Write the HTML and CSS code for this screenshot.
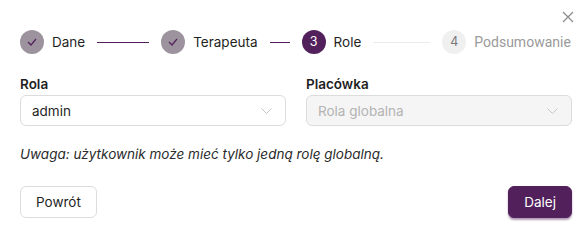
FILE: index.html
```html
<!DOCTYPE html>
<html lang="pl">
<head>
    <meta charset="UTF-8">
    <meta name="viewport" content="width=device-width, initial-scale=1.0">
    <title>Nowy użytkownik - role</title>
    <link rel="stylesheet" href="styles.css">
</head>
<body>
    <div class="modal">
        <button type="button" class="close" aria-label="Zamknij">
            <svg width="12" height="12" viewBox="0 0 12 12"><path d="M1 1L11 11M11 1L1 11" stroke="#8a8a8a" stroke-width="1.2" fill="none"/></svg>
        </button>

        <div class="steps">
            <div class="step done">
                <span class="dot"><svg width="10" height="8" viewBox="0 0 10 8"><path d="M1 4L4 7L9 1" stroke="#52215c" stroke-width="1.2" fill="none"/></svg></span>
                <span class="name">Dane</span>
            </div>
            <div class="line active"></div>
            <div class="step done">
                <span class="dot"><svg width="10" height="8" viewBox="0 0 10 8"><path d="M1 4L4 7L9 1" stroke="#52215c" stroke-width="1.2" fill="none"/></svg></span>
                <span class="name">Terapeuta</span>
            </div>
            <div class="line active short"></div>
            <div class="step current">
                <span class="dot">3</span>
                <span class="name">Role</span>
            </div>
            <div class="line"></div>
            <div class="step todo">
                <span class="dot">4</span>
                <span class="name">Podsumowanie</span>
            </div>
        </div>

        <div class="fields">
            <div class="field-group">
                <label for="role">Rola</label>
                <div class="select">
                    <span>admin</span>
                    <svg width="11" height="6" viewBox="0 0 11 6"><path d="M0.5 0.5L5.5 5.5L10.5 0.5" stroke="#c4c4c4" stroke-width="1" fill="none"/></svg>
                </div>
            </div>
            <div class="field-group">
                <label for="facility">Placówka</label>
                <div class="select disabled">
                    <span>Rola globalna</span>
                    <svg width="11" height="6" viewBox="0 0 11 6"><path d="M0.5 0.5L5.5 5.5L10.5 0.5" stroke="#c4c4c4" stroke-width="1" fill="none"/></svg>
                </div>
            </div>
        </div>

        <p class="note">Uwaga: użytkownik może mieć tylko jedną rolę globalną.</p>

        <div class="buttons">
            <button type="button" class="btn">Powrót</button>
            <button type="button" class="btn primary">Dalej</button>
        </div>
    </div>
</body>
</html>
```

FILE: styles.css
```css
body {
    font-family: Inter, "Noto Sans", sans-serif;
    background-color: #fff;
    color: #1f1f1f;
    margin: 0;
    padding: 0;
}
.modal {
    position: relative;
    width: 588px;
    height: 234px;
    box-sizing: border-box;
    padding: 30px 16px 0 20px;
}
.close {
    position: absolute;
    top: 11px;
    right: 14px;
    width: 12px;
    height: 12px;
    padding: 0;
    border: none;
    background: none;
    display: flex;
}
.steps {
    display: flex;
    align-items: center;
    height: 24px;
}
.step {
    display: flex;
    align-items: center;
    gap: 8px;
    font-size: 13.5px;
    line-height: 16px;
}
.dot {
    width: 24px;
    height: 24px;
    border-radius: 50%;
    display: flex;
    align-items: center;
    justify-content: center;
    font-size: 12.5px;
}
.step.done .dot {
    background-color: #9d939f;
}
.step.current .dot {
    background-color: #52215c;
    color: #fff;
}
.step.todo .dot {
    background-color: #f0f0f0;
    color: #7a7a7a;
}
.step.todo .name {
    font-family: Roboto, Inter, sans-serif;
    font-size: 14px;
    color: #9a9a9a;
}
.line {
    flex: 0 0 57px;
    height: 1px;
    background-color: #ebebeb;
    margin: 0 12px;
}
.line.active {
    background-color: #52215c;
    flex-basis: 52px;
}
.line.short {
    flex-basis: 20px;
}
.fields {
    display: flex;
    gap: 20px;
    margin-top: 21px;
}
.field-group {
    flex: 1;
}
.field-group label {
    display: block;
    font-size: 13.5px;
    font-weight: 600;
    margin-bottom: 2px;
    line-height: 18px;
}
.select {
    height: 31px;
    box-sizing: border-box;
    border: 1px solid #dcdcdc;
    border-radius: 6px;
    padding: 0 13px 0 11px;
    display: flex;
    align-items: center;
    justify-content: space-between;
    font-size: 13.5px;
}
.select.disabled {
    background-color: #f5f5f5;
    color: #b3b3b3;
}
.note {
    font-style: italic;
    font-size: 13.5px;
    margin: 19px 0 0;
    line-height: 18px;
    color: #2a2a2a;
}
.buttons {
    display: flex;
    justify-content: space-between;
    margin-top: 23px;
}
.btn {
    font-family: inherit;
    font-size: 13.5px;
    height: 32px;
    padding: 0 15px;
    border: 1px solid #dcdcdc;
    border-radius: 6px;
    background-color: #fff;
    color: #1f1f1f;
}
.btn.primary {
    background-color: #52215c;
    border-color: #52215c;
    color: #fff;
    box-shadow: 0 2px 2px rgba(82, 33, 92, 0.45);
}
```
